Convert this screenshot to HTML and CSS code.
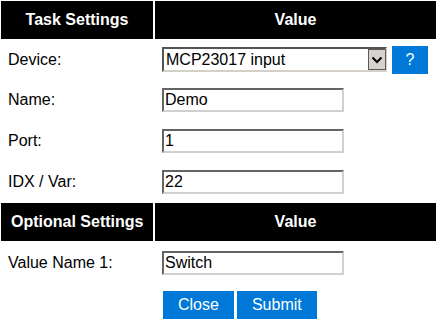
FILE: index.html
```html
<!DOCTYPE html>
<html lang="en">
<head>
  <meta charset="UTF-8" />
  <title>Task Settings</title>
  <link rel="stylesheet" href="styles.css">
</head>
<body>
  <form>
    <table class="settings">
      <colgroup>
        <col class="col-label" />
        <col class="col-value" />
      </colgroup>
      <tr class="head">
        <th>Task Settings</th>
        <th>Value</th>
      </tr>
      <tr class="row-device">
        <td>Device:</td>
        <td>
          <div class="device-line">
            <span class="select-wrap">
              <select class="select">
                <option>MCP23017 input</option>
              </select>
              <span class="select-arrow">
                <svg width="18" height="21" viewBox="0 0 18 21">
                  <rect x="0.5" y="0.5" width="17" height="20" fill="#d6d3ce" stroke="#5a5a5a" />
                  <polyline points="4.5,8.5 9,13 13.5,8.5" fill="none" stroke="#000" stroke-width="2" />
                </svg>
              </span>
            </span>
            <a class="button help">?</a>
          </div>
        </td>
      </tr>
      <tr class="row">
        <td>Name:</td>
        <td><input class="field" type="text" value="Demo" /></td>
      </tr>
      <tr class="row">
        <td>Port:</td>
        <td><input class="field" type="text" value="1" /></td>
      </tr>
      <tr class="row">
        <td>IDX / Var:</td>
        <td><input class="field" type="text" value="22" /></td>
      </tr>
      <tr class="head">
        <th>Optional Settings</th>
        <th>Value</th>
      </tr>
      <tr class="row">
        <td>Value Name 1:</td>
        <td><input class="field" type="text" value="Switch" /></td>
      </tr>
      <tr class="row-buttons">
        <td></td>
        <td>
          <div class="buttons">
            <a class="button">Close</a>
            <a class="button">Submit</a>
          </div>
        </td>
      </tr>
    </table>
  </form>
</body>
</html>
```

FILE: styles.css
```css
body {
  margin: 0;
  font-family: "Liberation Sans", Arial, sans-serif;
  font-size: 16px;
  color: #000;
  background: #fff;
  overflow: hidden;
}
.settings {
  margin: -1px 0 0 -1px;
  width: 439px;
  table-layout: fixed;
  border-collapse: separate;
  border-spacing: 2px;
}
.col-label {
  width: 152px;
}
.col-value {
  width: 281px;
}
th {
  background-color: #000;
  color: #fff;
  font-weight: bold;
  padding: 10px;
  line-height: normal;
  white-space: nowrap;
}
td {
  padding: 0 7px;
  line-height: 18px;
  white-space: nowrap;
}
.row-device td {
  height: 37px;
}
.row td {
  height: 39px;
}
.row-buttons td {
  height: 44px;
  vertical-align: top;
  padding-top: 7px;
}
.device-line {
  display: flex;
  align-items: center;
}
.select-wrap {
  position: relative;
  display: block;
  width: 225px;
  height: 25px;
}
.select {
  appearance: none;
  -webkit-appearance: none;
  box-sizing: border-box;
  width: 225px;
  height: 25px;
  margin: 0;
  padding: 0 2px;
  font-family: "Liberation Sans", Arial, sans-serif;
  font-size: 16px;
  color: #000;
  background: #fff;
  border-style: solid;
  border-width: 2px;
  border-color: #555 #d4d0c8 #d4d0c8 #555;
  border-radius: 0;
}
.select-arrow {
  position: absolute;
  top: 2px;
  right: 1px;
  width: 18px;
  height: 21px;
  pointer-events: none;
}
.select-arrow svg {
  display: block;
}
.field {
  box-sizing: border-box;
  width: 182px;
  height: 24px;
  margin: 0;
  padding: 0 1px;
  font-family: "Liberation Sans", Arial, sans-serif;
  font-size: 16px;
  color: #000;
  background: #fff;
  border-style: solid;
  border-width: 2px;
  border-color: #646464 #d0d0d0 #d0d0d0 #646464;
  vertical-align: middle;
}
.button {
  display: inline-block;
  background-color: #0078d7;
  color: #fff;
  padding: 5px 15px;
  line-height: 18px;
  text-decoration: none;
  cursor: pointer;
}
.help {
  margin-left: 5px;
  width: 36px;
  box-sizing: border-box;
  padding: 5px 0;
  text-align: center;
}
.buttons {
  display: flex;
  gap: 3px;
  margin-left: 1px;
}
```
